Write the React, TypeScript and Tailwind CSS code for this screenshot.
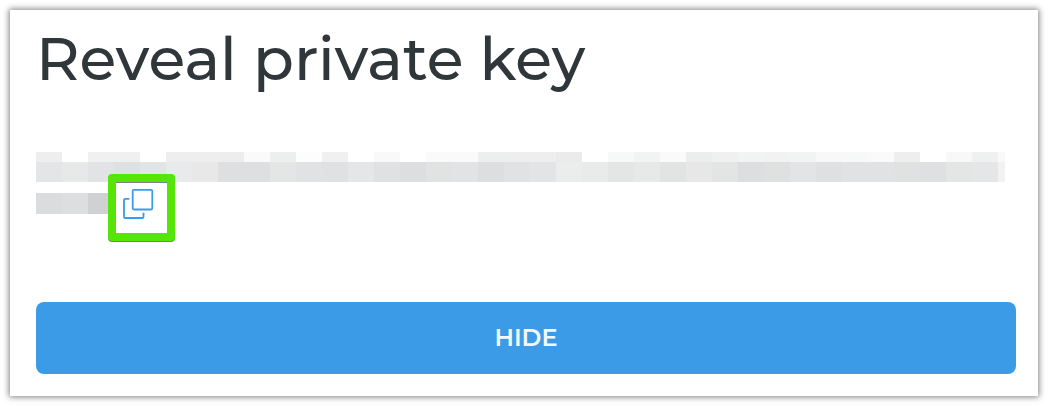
import React, { useState } from "react";

const TOP_ROW = [
  "#eeeeee", "#ffffff", "#f0f0f0", "#f0f0f0", "#ffffff", "#eeeeee", "#eeeeee", "#ededed",
  "#fafafa", "#edefee", "#fdfdfd", "#f0f0f0", "#ffffff", "#f9f9f9", "#ffffff", "#fafafa",
  "#fafafa", "#edefee", "#eeeeee", "#eeeeee", "#ebebeb", "#ffffff", "#f7f9f8", "#f2f4f3",
  "#fafafa", "#eceeed", "#f0f0f0", "#f2f4f3", "#f2f2f2", "#f2f4f3", "#f8f8f8", "#f7f9f8",
  "#fafafa", "#eeeeee", "#ffffff", "#f8f8f8", "#eff1f0", "#f9f9f9",
];

const MIDDLE_ROW = [
  "#e4e5e7", "#e7e9e8", "#e2e3e5", "#dfe0e2", "#e3e4e6", "#e9eaec", "#e8e8e8", "#dedfe1",
  "#dedfe1", "#e4e6e5", "#e1e2e4", "#e0e1e3", "#e5e6e8", "#e0e1e3", "#dddee0", "#e1e3e2",
  "#e2e3e5", "#dddee0", "#e1e2e4", "#e3e4e6", "#ebedec", "#e9ebea", "#e4e6e5", "#e7e9e8",
  "#e2e4e3", "#e7e7e7", "#e3e5e4", "#dddee0", "#dfe1e0", "#e3e4e6", "#dfe0e2", "#e1e2e4",
  "#e1e2e4", "#e0e2e1", "#dfe0e2", "#e4e6e5", "#e5e6e8", "#f2f2f2",
];

const LAST_ROW = ["#dbdcde", "#dddee0", "#d0d1d3"];

function Mosaic({ colors, className }: { colors: string[]; className: string }) {
  return (
    <div className={`flex overflow-hidden ${className}`}>
      {colors.map((color, i) => (
        <span
          key={i}
          className="w-[26px] shrink-0 last:w-[7px] last:grow"
          style={{ backgroundColor: color }}
        />
      ))}
    </div>
  );
}

function CopyIcon() {
  return (
    <svg
      className="h-8 w-8"
      viewBox="0 0 32 32"
      fill="none"
      stroke="#3b9be7"
      strokeWidth="1.8"
      strokeLinecap="butt"
      strokeLinejoin="round"
      aria-hidden="true"
    >
      <rect x="10.7" y="1.9" width="19.6" height="19.6" rx="1.2" />
      <path d="M7.4 10.8H3.3Q2 10.8 2 12.1V28.7Q2 30 3.3 30H20.2Q21.5 30 21.5 28.7V24.8" />
    </svg>
  );
}

export default function App() {
  const [hidden, setHidden] = useState(false);

  return (
    <main className="bg-white p-[10px] font-[Montserrat,Inter,sans-serif]">
      <section className="bg-white pt-[13px] pr-[22px] pb-[22px] pl-[26px] shadow-[0_0_6px_1px_rgba(0,0,0,0.5)]">
        <h1 className="text-[60px] leading-[72px] font-medium text-[#2f373b]">
          Reveal private key
        </h1>

        <div className={hidden ? "invisible mt-[57px]" : "mt-[57px]"}>
          <div className="max-w-[969px]">
            <Mosaic colors={TOP_ROW} className="h-[10px]" />
            <Mosaic colors={MIDDLE_ROW} className="h-5" />
          </div>
          <div className="relative mt-[11px]">
            <Mosaic colors={LAST_ROW} className="h-[21px] w-[78px]" />
            <button
              type="button"
              aria-label="Copy private key"
              className="absolute -top-[19px] left-[72px] flex h-[67px] w-[67px] items-start rounded border-8 border-[#55e506] bg-white pt-[6px] pl-[6px] shadow-[0_1px_0_#6f8a68,inset_0_1px_0_#808080]"
            >
              <CopyIcon />
            </button>
          </div>
        </div>

        <button
          type="button"
          onClick={() => setHidden(!hidden)}
          className="mt-[88px] h-[72px] w-full rounded-lg bg-[#3b9be7] text-2xl font-semibold text-[#f3f8fd]"
        >
          HIDE
        </button>
      </section>
    </main>
  );
}
